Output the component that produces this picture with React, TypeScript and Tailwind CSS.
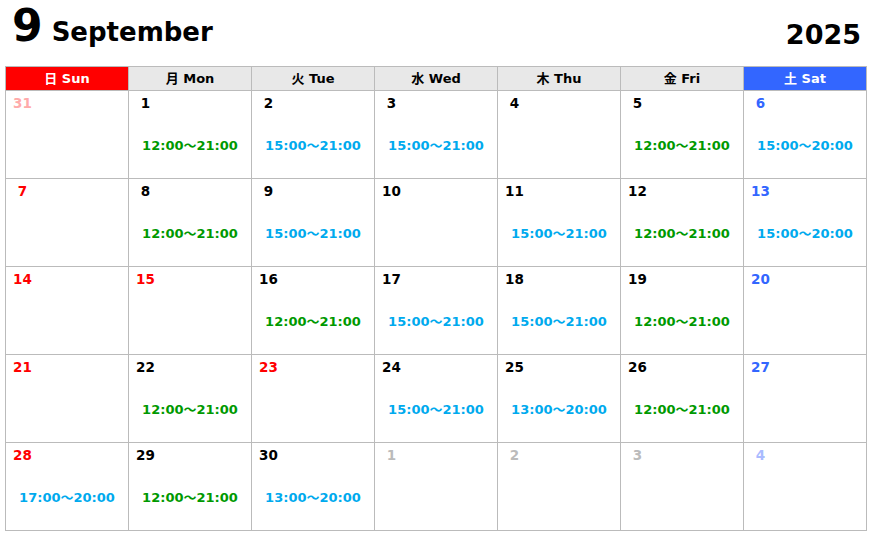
type Day = {
  n: number;
  color: string;
  time?: string;
  timeColor?: string;
};

const G = "text-[#009900]";
const C = "text-[#00aaee]";
const BLACK = "text-black";
const RED = "text-[#ff0000]";
const BLUE = "text-[#3366ff]";

const weeks: Day[][] = [
  [
    { n: 31, color: "text-[#ffaaaa]" },
    { n: 1, color: BLACK, time: "12:00～21:00", timeColor: G },
    { n: 2, color: BLACK, time: "15:00～21:00", timeColor: C },
    { n: 3, color: BLACK, time: "15:00～21:00", timeColor: C },
    { n: 4, color: BLACK },
    { n: 5, color: BLACK, time: "12:00～21:00", timeColor: G },
    { n: 6, color: BLUE, time: "15:00～20:00", timeColor: C },
  ],
  [
    { n: 7, color: RED },
    { n: 8, color: BLACK, time: "12:00～21:00", timeColor: G },
    { n: 9, color: BLACK, time: "15:00～21:00", timeColor: C },
    { n: 10, color: BLACK },
    { n: 11, color: BLACK, time: "15:00～21:00", timeColor: C },
    { n: 12, color: BLACK, time: "12:00～21:00", timeColor: G },
    { n: 13, color: BLUE, time: "15:00～20:00", timeColor: C },
  ],
  [
    { n: 14, color: RED },
    { n: 15, color: RED },
    { n: 16, color: BLACK, time: "12:00～21:00", timeColor: G },
    { n: 17, color: BLACK, time: "15:00～21:00", timeColor: C },
    { n: 18, color: BLACK, time: "15:00～21:00", timeColor: C },
    { n: 19, color: BLACK, time: "12:00～21:00", timeColor: G },
    { n: 20, color: BLUE },
  ],
  [
    { n: 21, color: RED },
    { n: 22, color: BLACK, time: "12:00～21:00", timeColor: G },
    { n: 23, color: RED },
    { n: 24, color: BLACK, time: "15:00～21:00", timeColor: C },
    { n: 25, color: BLACK, time: "13:00～20:00", timeColor: C },
    { n: 26, color: BLACK, time: "12:00～21:00", timeColor: G },
    { n: 27, color: BLUE },
  ],
  [
    { n: 28, color: RED, time: "17:00～20:00", timeColor: C },
    { n: 29, color: BLACK, time: "12:00～21:00", timeColor: G },
    { n: 30, color: BLACK, time: "13:00～20:00", timeColor: C },
    { n: 1, color: "text-[#bbbbbb]" },
    { n: 2, color: "text-[#bbbbbb]" },
    { n: 3, color: "text-[#bbbbbb]" },
    { n: 4, color: "text-[#aabbff]" },
  ],
];

const heads = [
  { label: "日 Sun", cls: "bg-[#ff0000] text-white" },
  { label: "月 Mon", cls: "bg-[#e8e8e8] text-black" },
  { label: "火 Tue", cls: "bg-[#e8e8e8] text-black" },
  { label: "水 Wed", cls: "bg-[#e8e8e8] text-black" },
  { label: "木 Thu", cls: "bg-[#e8e8e8] text-black" },
  { label: "金 Fri", cls: "bg-[#e8e8e8] text-black" },
  { label: "土 Sat", cls: "bg-[#3366ff] text-white" },
];

const font = "font-['DejaVu_Sans','Noto_Sans_CJK_JP',sans-serif]";

export default function App() {
  return (
    <div className={`w-[875px] h-[533px] bg-white ${font} font-bold`}>
      <div className="flex items-end justify-between px-[12px] h-[66px] pb-[18px]">
        <div className="flex items-baseline">
          <span className="text-[44px] leading-none">9</span>
          <span className="text-[26px] leading-none ml-[9px]">September</span>
        </div>
        <span className="text-[27px] leading-none mr-[2px]">2025</span>
      </div>
      <div className="mx-[5px] w-[862px] border-l border-t border-[#bbbbbb]">
        <div className="grid grid-cols-7">
          {heads.map((h) => (
            <div
              key={h.label}
              className={`h-[24px] border-r border-b border-[#bbbbbb] flex items-center justify-center text-[13px] ${h.cls}`}
            >
              {h.label}
            </div>
          ))}
        </div>
        {weeks.map((w, i) => (
          <div key={i} className="grid grid-cols-7">
            {w.map((d, j) => (
              <div key={j} className="h-[88px] border-r border-b border-[#bbbbbb] flex flex-col">
                <div className={`w-[33px] text-center text-[13.5px] leading-none mt-[6px] ${d.color}`}>
                  {d.n}
                </div>
                {d.time && (
                  <div className={`text-center text-[13px] leading-none mt-[28px] ${d.timeColor}`}>
                    {d.time}
                  </div>
                )}
              </div>
            ))}
          </div>
        ))}
      </div>
    </div>
  );
}
